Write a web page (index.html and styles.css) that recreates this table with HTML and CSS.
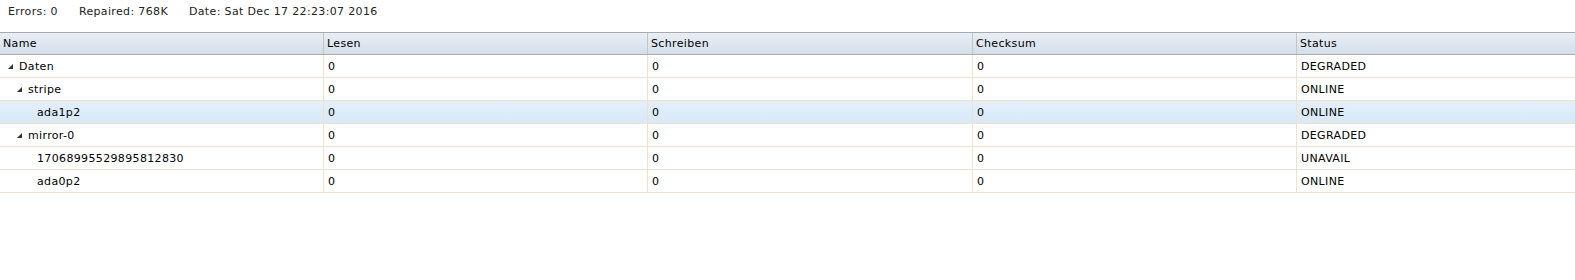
FILE: index.html
```html
<!DOCTYPE html>
<html>
<head>
<meta charset="utf-8">
<link rel="stylesheet" href="styles.css">
</head>
<body>
<div class="statusbar">
  <span class="stat">Errors: 0</span>
  <span class="stat">Repaired: 768K</span>
  <span class="stat">Date: Sat Dec 17 22:23:07 2016</span>
</div>
<div class="grid">
  <div class="row head">
    <div class="cell">Name</div>
    <div class="cell">Lesen</div>
    <div class="cell">Schreiben</div>
    <div class="cell">Checksum</div>
    <div class="cell">Status</div>
  </div>
  <div class="row">
    <div class="cell name lvl0"><svg class="tri" width="5" height="5" viewBox="0 0 5 5"><polygon points="5,0 5,5 0,5"/></svg>Daten</div>
    <div class="cell">0</div><div class="cell">0</div><div class="cell">0</div><div class="cell">DEGRADED</div>
  </div>
  <div class="row">
    <div class="cell name lvl1"><svg class="tri" width="5" height="5" viewBox="0 0 5 5"><polygon points="5,0 5,5 0,5"/></svg>stripe</div>
    <div class="cell">0</div><div class="cell">0</div><div class="cell">0</div><div class="cell">ONLINE</div>
  </div>
  <div class="row selected">
    <div class="cell name leaf">ada1p2</div>
    <div class="cell">0</div><div class="cell">0</div><div class="cell">0</div><div class="cell">ONLINE</div>
  </div>
  <div class="row">
    <div class="cell name lvl1"><svg class="tri" width="5" height="5" viewBox="0 0 5 5"><polygon points="5,0 5,5 0,5"/></svg>mirror-0</div>
    <div class="cell">0</div><div class="cell">0</div><div class="cell">0</div><div class="cell">DEGRADED</div>
  </div>
  <div class="row">
    <div class="cell name leaf">17068995529895812830</div>
    <div class="cell">0</div><div class="cell">0</div><div class="cell">0</div><div class="cell">UNAVAIL</div>
  </div>
  <div class="row">
    <div class="cell name leaf">ada0p2</div>
    <div class="cell">0</div><div class="cell">0</div><div class="cell">0</div><div class="cell">ONLINE</div>
  </div>
</div>
</body>
</html>
```
FILE: styles.css
```css
html, body {
  margin: 0;
  padding: 0;
  background: #fff;
  overflow: hidden;
}
body {
  font-family: "DejaVu Sans", Verdana, sans-serif;
  font-size: 11px;
  letter-spacing: 0.35px;
  color: #000;
}
.statusbar {
  display: flex;
  gap: 21px;
  padding: 5px 0 0 8px;
  height: 32px;
  box-sizing: border-box;
  color: #222;
}
.grid {
  width: 1623px;
}
.row {
  display: grid;
  grid-template-columns: 324px 324px 325px 324px 326px;
  height: 23px;
  box-sizing: border-box;
  border-bottom: 1px solid #f0e0d0;
}
.row.head {
  background: linear-gradient(#e9eef5, #d4dfea);
  border-top: 1px solid #a9a9a9;
  border-bottom: 1px solid #a9a9a9;
  height: 23px;
}
.row.selected {
  background: linear-gradient(#e3effb, #d9e9f9);
}
.cell {
  display: flex;
  align-items: center;
  padding-left: 4px;
  border-right: 1px solid #f0e0d0;
  white-space: nowrap;
  overflow: hidden;
}
.head .cell {
  border-right-color: #c5c5c5;
  padding-left: 3px;
}
.name { padding-left: 3px; }
.tri {
  fill: #333;
  margin-right: 6px;
  flex: none;
}
.lvl0 { padding-left: 8px; }
.lvl1 { padding-left: 17px; }
.leaf { padding-left: 37px; }
```
